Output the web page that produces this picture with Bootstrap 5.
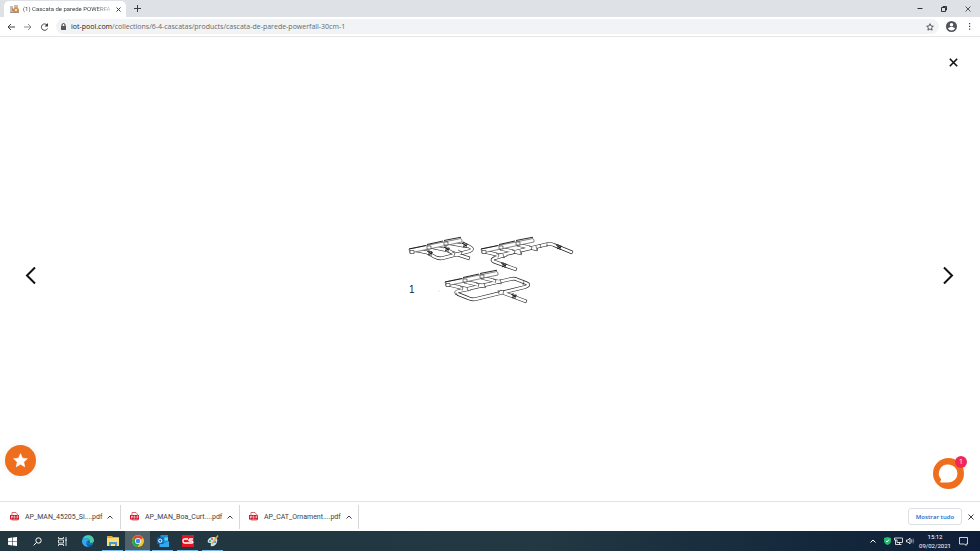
<!DOCTYPE html>
<html lang="pt">
<head>
<meta charset="utf-8">
<meta name="viewport" content="width=device-width, initial-scale=1">
<title>Cascata de parede POWERFALL</title>
<link href="https://cdn.jsdelivr.net/npm/bootstrap@5.3.0/dist/css/bootstrap.min.css" rel="stylesheet">
<style>
body{font-family:"Open Sans","Noto Sans",sans-serif;font-size:7px;line-height:10px;color:#3c4043;background:#fff}
button{border:0;background:none;padding:0;color:inherit;display:inline-flex;align-items:center;justify-content:center;flex:none}
svg{display:block;flex:none;overflow:visible}
.ln{fill:none;stroke:currentColor}
.tabstrip{background:#dee1e6;height:17px;padding-left:4px}
.tab{background:#fff;border-radius:5px 5px 0 0;width:122px;height:16px;padding:0 5px 0 6px;align-self:flex-end;font-size:6px}
.tab-name{-webkit-mask-image:linear-gradient(90deg,#000 80%,#0003)}
.tab-name,.file,.clock{font-family:Roboto,"Noto Sans",sans-serif}
.win{width:24px;height:15px;color:#333}
.tools{height:20px;border-bottom:1px solid #e4e5e7;padding:0 9px 0 6px;gap:7px}
.omni{background:#f1f3f4;border-radius:8px;height:15px;padding:0 5px 0 5px;gap:5px}
.omni input{border:0;background:none;padding:0;width:100%;outline:0;color:transparent;caret-color:#222;position:absolute;inset:0}
.url{color:#65696e}.url b{font-weight:400;color:#202124}
.viewer{padding:21px 22px 17px 25px;color:#111}
.float-star{left:5px;bottom:25px;width:31px;height:31px;border-radius:50%;background:#ee6e1d;box-shadow:0 0 6px #0001}
.float-chat{right:16px;bottom:12px;width:31px;height:31px;border-radius:50%;background:#ee6e1d}
.count{right:-3px;top:-2px;width:12px;height:12px;border-radius:50%;background:#f0285a;color:#fff;font-size:7px;line-height:12px}
.shelf{height:30px;border-top:1px solid #e2e3e5;padding-right:6px}
.file{width:119px;height:24px;border-right:1px solid #d5d7da;padding:0 8px 0 9px;gap:5px;font-size:7px}
.first-file{width:121px;padding-left:10px}
.show-all{border:1px solid #dcdfe3;border-radius:3px;width:54px;height:17px;color:#1a66d2;font-size:6px;margin-right:6px}
.taskbar{background:linear-gradient(90deg,#21363f,#223842 55%,#152a3c 80%,#0e1e38);height:20px;color:#fff}
.app{width:25px;height:20px}
.open-app{background:linear-gradient(#76b9ed,#76b9ed) center bottom/21px 1px no-repeat}
.active-app{background-color:#50616a;background-size:25px 1px}
.clock{font-size:6px;line-height:9px;width:34px}
.tray{gap:3px;padding-right:12px}
</style>
<script src="https://cdn.jsdelivr.net/npm/bootstrap@5.3.0/dist/js/bootstrap.bundle.min.js"></script>
</head>
<body class="vh-100 d-flex flex-column overflow-hidden">
<header>
 <div class="tabstrip d-flex align-items-center">
  <div class="tab d-flex align-items-center gap-1">
   <svg width="9" height="9" viewBox="0 0 9 9"><path fill="#c5beb8" d="M0 1h3v7H0zM4 0h4v3H4z"/><path fill="#e38a38" d="M3 4l3-2 3 2v4H3z"/><path fill="#9b928b" d="M0 7h9v1H0zM2 3h1v3H2z"/><path fill="#f7ddb8" d="M5 4h2v2H5z"/></svg>
   <span class="tab-name flex-fill text-nowrap">(1) Cascata de parede POWERFA</span>
   <button aria-label="Fechar guia"><svg width="5" height="5" viewBox="0 0 5 5"><path class="ln" d="M.5.5l4 4m0-4l-4 4"/></svg></button>
  </div>
  <button class="ms-2" aria-label="Nova guia"><svg width="7" height="7" viewBox="0 0 7 7"><path class="ln" d="M3.500 0v7M0 3.500h7"/></svg></button>
  <div class="ms-auto d-flex">
   <button class="win" aria-label="Minimizar"><svg width="6" height="6" viewBox="0 0 6 6"><path class="ln" d="M.5 2.500h5"/></svg></button>
   <button class="win" aria-label="Restaurar"><svg width="6" height="6" viewBox="0 0 6 6"><path class="ln" d="M.5 1.500h4v4h-4zM2 1V.5h3.500V4H5"/></svg></button>
   <button class="win" aria-label="Fechar janela"><svg width="6" height="6" viewBox="0 0 6 6"><path class="ln" stroke-width=".8" d="M.5.5l5 5m0-5l-5 5"/></svg></button>
  </div>
 </div>
 <div class="tools d-flex align-items-center">
  <button aria-label="Voltar"><svg width="10" height="8" viewBox="0 0 10 8"><path class="ln" d="M9 4H2m3-3L2 4l3 3"/></svg></button>
  <button class="text-secondary" aria-label="Avançar"><svg width="10" height="8" viewBox="0 0 10 8"><path class="ln" stroke-width=".8" d="M1 4h7M5 1l3 3-3 3"/></svg></button>
  <button aria-label="Recarregar"><svg width="9" height="8" viewBox="0 0 9 8"><path class="ln" d="M7.500 5.500A3.200 3.200 0 1 1 7 2"/><path fill="currentColor" d="M8 0v3.500H4.500z"/></svg></button>
  <div class="omni d-flex align-items-center flex-fill">
   <svg width="5" height="7" viewBox="0 0 5 7"><path fill="#54585c" d="M0 3h5v4H0z"/><path class="ln" d="M1 3V2a1.500 1.500 0 0 1 3 0v1"/></svg>
   <label class="url flex-fill position-relative"><b>iot-pool.com</b>/collections/6-4-cascatas/products/cascata-de-parede-powerfall-30cm-1<input type="text" aria-label="Endereço"></label>
   <button aria-label="Favoritos"><svg width="8" height="8" viewBox="0 0 24 24"><path class="ln" stroke-width="2.500" d="M12 2l3 7 7 .7-5.300 4.800 1.600 7L12 18l-6.300 3.500 1.600-7L2 9.700 9 9z"/></svg></button>
  </div>
  <button aria-label="Perfil"><svg width="11" height="11" viewBox="0 0 22 22"><circle cx="11" cy="11" r="11" fill="#50545a"/><circle cx="11" cy="7.500" r="3.500" fill="#fff"/><path fill="#fff" d="M4 15c2-4 12-4 14 0-3 5-11 5-14 0z"/></svg></button>
  <button class="ms-1" aria-label="Menu"><svg width="3" height="7" viewBox="0 0 3 7"><path fill="currentColor" d="M1 0h1.200v1.200H1zM1 2.800h1.200V4H1zM1 5.600h1.200v1.200H1z"/></svg></button>
 </div>
</header>
<main class="viewer flex-fill position-relative d-flex flex-column">
 <button class="align-self-end" aria-label="Fechar imagem"><svg width="9" height="9" viewBox="0 0 9 9"><path class="ln" stroke-width="1.600" d="M.8.8l7.400 7.400m0-7.400L.8 8.200"/></svg></button>
 <div class="flex-fill d-flex align-items-center justify-content-between pe-1">
  <button aria-label="Imagem anterior"><svg width="12" height="19" viewBox="0 0 12 19"><path class="ln" stroke-width="2" d="M10 1.500L2 9.500l8 8"/></svg></button>
  <svg width="174" height="82" viewBox="403 234 174 82" role="img" aria-label="Esquemas de montagem da tubulação">
   <defs>
    <g id="rail"><path d="M0 0l52-10.500 1 1.500v2L1 4z" fill="#fff" stroke="#333" stroke-width=".6"/><path d="M0 0l17-3.500M18-4.500L34-8M35-8.500l17-3.300" fill="none" stroke="#111" stroke-width=".9"/><path d="M1 1.500h4v3H1zM18-3h4v3h-4zM35-7h4v3h-4z" fill="#fff" stroke="#222" stroke-width=".6"/></g>
    <g id="valve"><path d="M-3-2l5 3M-2 2l5-3M-1-3v5M1-2v5" fill="none" stroke="#111" stroke-width=".8"/></g>
    <g id="feeds"><path d="M5 3l17 4M21 0l18 4M38-4l17 4"/></g>
    <g id="tees"><path d="M15 4.500l3 1-1 3M31 1l3 1-1 3M48-3l3 1-1 3M22 5l1 4M39 1l1 4M55-3l1 4" fill="none" stroke="#222" stroke-width=".6"/></g>
    <g id="pipe-a"><path d="M415 249l15 3M432 246l14 3M449 242l16 3M428 252l7 4q4 2 8 1l27-7q4-2 0-4l-6-3M445 248l8 4 15 5"/></g>
    <g id="pipe-b"><path d="M502 254l42-10q6-2 10 0l17 7M505 254l-10 3q-5 2 0 4l20 7"/><use href="#feeds" x="481" y="248"/></g>
    <g id="pipe-c"><path d="M467 288l44-10q4-1 7 1l8 3q5 2-1 4l-49 12q-4 1-8-1l-10-4q-4-2 1-3l10-2M501 291l24 9"/><use href="#feeds" x="445" y="281"/></g>
   </defs>
   <g fill="none" stroke="#222" stroke-width="3.600" stroke-linecap="square"><use href="#pipe-a"/><use href="#pipe-b"/><use href="#pipe-c"/></g>
   <g fill="none" stroke="#fff" stroke-width="2.400" stroke-linecap="square"><use href="#pipe-a"/><use href="#pipe-b"/><use href="#pipe-c"/></g>
   <use href="#rail" x="409" y="248"/><use href="#rail" x="481" y="248"/><use href="#rail" x="445" y="281"/>
   <use href="#tees" x="481" y="248"/><use href="#tees" x="445" y="281"/>
   <path d="M452 251l3 1-1 3M458 249l4 2-1 3M540 243l1 4M547 242v4M498 289l1 4M504 289l-1 4M456 292l2 3M524 280l-1 4" fill="none" stroke="#222" stroke-width=".6"/>
   <use href="#valve" x="430" y="252"/><use href="#valve" x="447" y="248"/><use href="#valve" x="465" y="244"/><use href="#valve" x="559" y="246"/><use href="#valve" x="504" y="264"/><use href="#valve" x="514" y="295"/>
   <text x="409" y="292" font-family="Liberation Sans,sans-serif" font-size="10" fill="#222">1</text>
   <circle cx="439" cy="290" r=".4" fill="#888"/>
  </svg>
  <button aria-label="Próxima imagem"><svg width="12" height="19" viewBox="0 0 12 19"><path class="ln" stroke-width="2" d="M2 1.500l8 8-8 8"/></svg></button>
 </div>
 <button class="float-star position-absolute" aria-label="Recompensas"><svg width="15" height="15" viewBox="0 0 24 24"><path fill="#fff" stroke="#fff" stroke-linejoin="round" d="M12 1l3.200 7.300 7.800.8-5.900 5.200 1.700 7.700L12 18l-6.800 4 1.700-7.700L1 9.100l7.800-.8z"/></svg></button>
 <button class="float-chat position-absolute" aria-label="Chat"><svg width="19" height="19" viewBox="0 0 19 19"><path fill="#fff" d="M9.500.5a9 9 0 1 1 0 18H1.500l-.3-1 1-2A9 9 0 0 1 9.500.5z"/></svg><span class="count position-absolute text-center">1</span></button>
</main>
<section class="shelf d-flex align-items-center" aria-label="Downloads">
 <svg width="0" height="0" class="position-absolute"><defs><g id="pdf"><path fill="#fff" stroke="#c33" stroke-width=".7" d="M2 .5h4L8 3v5H2z"/><path fill="#d3172b" d="M0 3h9v4.500H0z"/><path d="M1.500 6.500V4h1v1.300h-1M4 4v2.300h.5Q6 5 4.500 4zM7 6.500V4h1.500M7 5.200h1.200" fill="none" stroke="#fff" stroke-width=".6"/></g><path id="chev" class="ln" d="M.5 3.500L3 1l2.500 2.500"/></defs></svg>
 <div class="file first-file d-flex align-items-center"><svg width="10" height="9"><use href="#pdf"/></svg><a class="text-reset text-decoration-none text-nowrap" href="#">AP_MAN_45205_Si....pdf</a><button class="ms-auto" aria-label="Opções"><svg width="6" height="4"><use href="#chev"/></svg></button></div>
 <div class="file d-flex align-items-center"><svg width="10" height="9"><use href="#pdf"/></svg><a class="text-reset text-decoration-none text-nowrap" href="#">AP_MAN_Boa_Curt....pdf</a><button class="ms-auto" aria-label="Opções"><svg width="6" height="4"><use href="#chev"/></svg></button></div>
 <div class="file d-flex align-items-center"><svg width="10" height="9"><use href="#pdf"/></svg><a class="text-reset text-decoration-none text-nowrap" href="#">AP_CAT_Ornament....pdf</a><button class="ms-auto" aria-label="Opções"><svg width="6" height="4"><use href="#chev"/></svg></button></div>
 <button class="show-all ms-auto fw-semibold">Mostrar tudo</button>
 <button aria-label="Fechar downloads"><svg width="6" height="6" viewBox="0 0 6 6"><path class="ln" d="M.5.5l5 5m0-5l-5 5"/></svg></button>
</section>
<footer class="taskbar d-flex align-items-center">
 <button class="app" aria-label="Iniciar"><svg width="9" height="9" viewBox="0 0 9 9"><path fill="#fff" d="M0 1.200L4 .6v3.600H0zM4.600.5L9 0v4.200H4.600zM0 4.800h4v3.600l-4-.6zM4.600 4.800H9V9l-4.400-.5z"/></svg></button>
 <button class="app" aria-label="Pesquisar"><svg width="9" height="9" viewBox="0 0 9 9"><circle class="ln" cx="5.500" cy="3.500" r="2.700"/><path class="ln" d="M3.600 5.400L.6 8.400"/></svg></button>
 <button class="app" aria-label="Visão de tarefas"><svg width="9" height="9" viewBox="0 0 9 9"><path class="ln" stroke-width=".8" d="M.5 0v1.500h5V0M.5 3h5v3h-5zM.5 9V7.500h5V9M8 0v9M7 3h2"/></svg></button>
 <button class="app" aria-label="Edge"><svg width="12" height="12" viewBox="0 0 24 24"><circle cx="12" cy="12" r="12" fill="#1476ca"/><path fill="#48cda0" d="M1 8C5-3 23-2 24 11c0 5-7 6-9 4 4-6-5-12-14-7z"/><path fill="#35a8e6" d="M0 12C1 4 13 4 15 11 9 8 5 18 13 23 6 24 0 19 0 12z"/><path fill="#144e91" d="M9 13c-1 6 6 9 13 5-3 6-14 7-13-5z"/><path fill="#21363f" d="M13 12c-2 3 1 6 8 4l3 1v-3c-3 3-9 3-9 1z"/></svg></button>
 <button class="app open-app" aria-label="Explorador de arquivos"><svg width="12" height="10" viewBox="0 0 12 10"><path fill="#e8a735" d="M0 0h5l1 1h6v9H0z"/><path fill="#ffdc72" d="M0 2h12v8H0z"/><path fill="#3e9cdd" d="M2 6h8v4H8V8H4v2H2z"/></svg></button>
 <button class="app open-app active-app" aria-label="Chrome"><svg width="12" height="12" viewBox="0 0 24 24"><circle cx="12" cy="12" r="12" fill="#fbc91e"/><path fill="#e34334" d="M12 12L2 6a12 12 0 0 1 20 0z"/><path fill="#29a454" d="M12 12L2 6a12 12 0 0 0 9 18l5-8z"/><circle cx="12" cy="12" r="6" fill="#fff"/><circle cx="12" cy="12" r="4.600" fill="#4285f4"/></svg></button>
 <button class="app open-app" aria-label="Outlook"><svg width="12" height="12" viewBox="0 0 24 24"><path fill="#1490df" d="M7 0h15v20H7z"/><path fill="#50d9ff" d="M15 5h7v6h-7z"/><path fill="#32a9ef" d="M5 12l9 5 10-5v12H5z"/><path fill="#0b65b6" d="M0 5h13v13H0z"/><circle cx="6.500" cy="11.500" r="3.300" fill="none" stroke="#fff" stroke-width="2"/></svg></button>
 <button class="app open-app" aria-label="CS"><svg width="12" height="12" viewBox="0 0 12 12"><path fill="#df1522" d="M0 0h12v12H0z"/><path fill="none" stroke="#fff" stroke-width="1.300" d="M6 4H2.500Q1 4 1 6t1.500 2H6M11 4H7.500Q6 6 8 6h2q2 2-.5 2H6"/></svg></button>
 <button class="app open-app" aria-label="Paint"><svg width="12" height="12" viewBox="0 0 12 12"><path fill="#c6e4f1" d="M1 5c3-5 11-3 9 2-1 4-5 5-6 4s1-3-1-3-3-1-2-3z"/><circle cx="3" cy="6" r="1" fill="#2e9e58"/><circle cx="5" cy="4" r="1" fill="#dd4635"/><circle cx="8" cy="7" r="1" fill="#327fc9"/><path stroke="#e9a33b" stroke-width="1.400" d="M11 .5L5 9"/></svg></button>
 <div class="tray ms-auto d-flex align-items-center">
  <button class="pe-1" aria-label="Ícones ocultos"><svg width="7" height="5"><use href="#chev"/></svg></button>
  <svg width="7" height="8" viewBox="0 0 7 8"><path fill="#25b871" d="M3.500 0L7 1v3c0 2-2 3.500-3.500 4C2 7.500 0 6 0 4V1z"/><path fill="none" stroke="#fff" d="M2 4l1 1 2-2.500"/></svg>
  <svg width="9" height="8" viewBox="0 0 9 8"><path class="ln" stroke-width=".8" d="M2 1h6.500v4.500H3V3H.5V1H2M1.500 3v4.500h6M5.500 5.500v2"/></svg>
  <svg width="9" height="8" viewBox="0 0 9 8"><path class="ln" stroke-width=".8" d="M.5 3h1.500l2-2v6l-2-2H.5zM5.500 2.500q1 1.500 0 3"/><path class="ln opacity-50" stroke-width=".8" d="M7 1.500q1.500 2.500 0 5"/></svg>
  <div class="clock text-center">15:12<br>09/02/2021</div>
  <button class="ms-1" aria-label="Notificações"><svg width="9" height="9" viewBox="0 0 9 9"><path class="ln" stroke-width=".8" d="M.5.5h8V7H7v1.500L5.500 7h-5z"/></svg></button>
 </div>
</footer>
</body>
</html>
